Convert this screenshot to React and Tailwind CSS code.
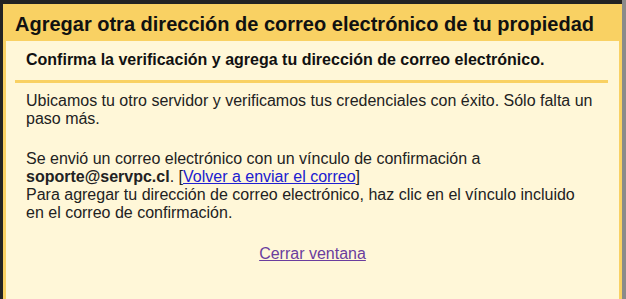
import React from 'react';

export default function App() {
  return (
    <div className="flex h-[299px] w-[626px] overflow-hidden bg-[#232323] font-['Liberation_Sans',Arial,sans-serif] text-[#222]">
      <div className="mt-[4px] ml-[3px] flex flex-1 flex-col bg-[#f9d163] px-[3px]">
        <h1 className="pt-[8px] pb-[5px] pl-[9px] text-[20px] leading-[24px] font-bold whitespace-nowrap text-[#111]">
          Agregar otra dirección de correo electrónico de tu propiedad
        </h1>
        <div className="flex-1 bg-[#fff7d8] pl-[9px] pr-[11px]">
          <h2 className="border-b-[3px] border-[#f9d163] pt-[10px] pb-[11px] pl-[11px] text-[16px] leading-[18px] font-bold whitespace-nowrap text-[#111]">
            Confirma la verificación y agrega tu dirección de correo electrónico.
          </h2>
          <div className="pl-[11px] pr-[14px] text-[16px] leading-[18px]">
            <p className="mt-[9px]">
              Ubicamos tu otro servidor y verificamos tus credenciales con éxito. Sólo falta un paso más.
            </p>
            <p className="mt-[22px]">
              Se envió un correo electrónico con un vínculo de confirmación a{' '}
              <b>soporte@servpc.cl</b>. [<a href="#" className="text-[#2020d0] underline">Volver a enviar el correo</a>]
              <br />
              Para agregar tu dirección de correo electrónico, haz clic en el vínculo incluido en el correo de confirmación.
            </p>
            <p className="mt-[23px] pl-[5px] text-center">
              <a href="#" className="text-[#6a3d9e] underline">Cerrar ventana</a>
            </p>
          </div>
        </div>
      </div>
      <div className="w-[4px] bg-[#8a8a8a]" />
    </div>
  );
}
